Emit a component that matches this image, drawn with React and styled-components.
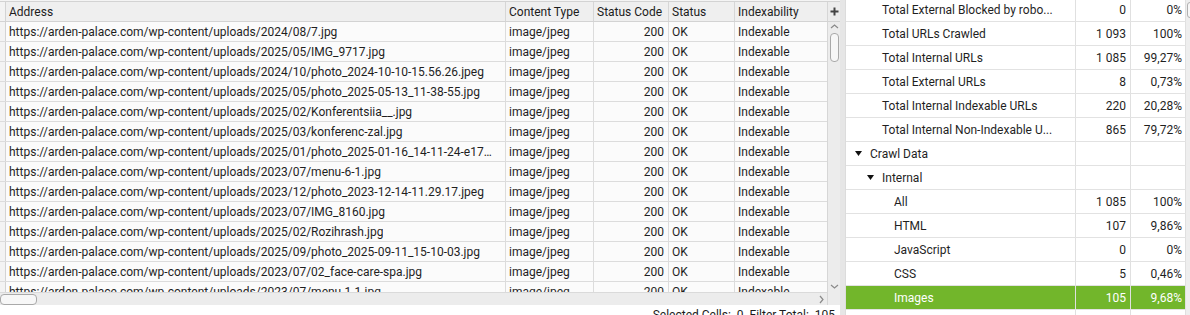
import React from 'react';
import styled, { createGlobalStyle } from 'styled-components';

const Global = createGlobalStyle`
  html, body { margin: 0; padding: 0; }
  body {
    font-family: Roboto, "Noto Sans", "Liberation Sans", sans-serif;
    font-size: 12px;
    color: #1f1f1f;
    background: #e8e8e8;
    overflow: hidden;
  }
  * { box-sizing: border-box; }
`;

const Page = styled.div`
  display: flex;
  width: 1190px;
  height: 315px;
  overflow: hidden;
  background: #e8e8e8;
`;

const LeftPanel = styled.div`
  width: 840px;
  flex: none;
  display: flex;
  flex-direction: column;
  padding-top: 1px;
  background: #f4f4f4;
  overflow: hidden;
`;

const COLS = '6px 500px 88px 75px 66px 92px';

const HeaderRow = styled.div`
  flex: none;
  display: grid;
  grid-template-columns: ${COLS} 13px;
  height: 21px;
  border-top: 1px solid #d3d3d3;
  border-bottom: 1px solid #d3d3d3;
  background: #efefef;
`;

const HeadCell = styled.div`
  display: flex;
  align-items: center;
  padding-left: 3px;
  border-right: ${p => (p.$last ? 'none' : '1px solid #d6d6d6')};
  white-space: nowrap;
  overflow: hidden;
  color: #1c1c1c;
`;

const PlusCell = styled.div`
  display: flex;
  align-items: center;
  justify-content: center;
  border-left: 1px solid #d6d6d6;
  background: #ececec;
`;

const Body = styled.div`
  flex: none;
  display: flex;
  height: 270px;
`;

const Rows = styled.div`
  width: 827px;
  overflow: hidden;
  background: #fff;
`;

const Row = styled.div`
  display: grid;
  grid-template-columns: ${COLS};
  height: 20px;
  border-bottom: 1px solid #dcdcdc;
  background: #fbfbfb;
`;

const Cell = styled.div`
  display: flex;
  align-items: center;
  justify-content: ${p => (p.$right ? 'flex-end' : 'flex-start')};
  padding: 0 ${p => (p.$right ? '4px' : '8px')} 0 ${p => (p.$right ? '0' : '3px')};
  border-right: ${p => (p.$last ? 'none' : '1px solid #dcdcdc')};
  white-space: nowrap;
  overflow: hidden;
  min-width: 0;
`;

const Ellip = styled.span`
  overflow: hidden;
  text-overflow: ellipsis;
  white-space: nowrap;
`;

const Gutter = styled.div`
  border-right: 1px solid #d3d3d3;
  background: #f3f3f3;
`;

const VScroll = styled.div`
  width: 13px;
  flex: none;
  border-left: 1px solid #d6d6d6;
  background: #ececec;
  display: flex;
  flex-direction: column;
  align-items: center;
  padding: 1px 0 2px;
`;

const Thumb = styled.div`
  width: ${p => p.$w};
  height: ${p => p.$h};
  margin-top: ${p => p.$mt || 0}px;
  border: 1px solid #a9a9a9;
  border-radius: 4px;
  background: #f7f7f7;
  flex: none;
`;

const Spacer = styled.div`
  flex: 1;
`;

const HScrollRow = styled.div`
  flex: none;
  display: flex;
  height: 13px;
`;

const HScroll = styled.div`
  width: 827px;
  display: flex;
  align-items: center;
  background: #ececec;
  border-top: 1px solid #dadada;
  padding: 0 2px 0 0;
`;

const Corner = styled.div`
  width: 13px;
  background: #ececec;
  border-left: 1px solid #d6d6d6;
`;

const StatusBar = styled.div`
  flex: 1 1 auto;
  min-height: 0;
  display: flex;
  justify-content: flex-end;
  gap: 6px;
  padding: 3px 5px 0 0;
  background: #fff;
  color: #1c1c1c;
  white-space: nowrap;
  overflow: hidden;
`;

const Divider = styled.div`
  width: 6px;
  flex: none;
  background: #e6e6e6;
  border-right: 1px solid #dcdcdc;
`;

const RightPanel = styled.div`
  width: 344px;
  flex: none;
  display: flex;
  overflow: hidden;
  background: #fff;
`;

const Tree = styled.div`
  width: 340px;
  flex: none;
  margin-top: -2px;
`;

const TreeRow = styled.div`
  display: grid;
  grid-template-columns: 230px 55px 55px;
  height: 24px;
  border-bottom: 1px solid #e2e2e2;
  background: ${p => (p.$selected ? '#72b62b' : '#fff')};
  color: ${p => (p.$selected ? '#fff' : '#1f1f1f')};
`;

const LabelCell = styled.div`
  display: flex;
  align-items: center;
  padding-left: ${p => 9 + p.$level * 12}px;
  border-right: 1px solid #e0e0e0;
  white-space: nowrap;
  overflow: hidden;
`;

const Toggle = styled.span`
  width: 15px;
  flex: none;
  display: flex;
  align-items: center;
`;

const NumCell = styled.div`
  display: flex;
  align-items: center;
  justify-content: flex-end;
  padding-right: ${p => p.$pr || 4}px;
  border-right: 1px solid #e0e0e0;
  white-space: nowrap;
`;

const RScroll = styled.div`
  width: 4px;
  flex: none;
  background: #eeeeee;
  display: flex;
  flex-direction: column;
  padding: 2px 0 0 1px;
`;

const RThumb = styled.div`
  width: 6px;
  height: 16px;
  border: 1px solid #b0b0b0;
  border-radius: 4px;
  background: #f7f7f7;
`;

const Chevron = ({ dir }) => {
  const pts = {
    up: '1,5 4.5,2 8,5',
    down: '1,2 4.5,5 8,2',
    right: '2,1 5,4.5 2,8',
  }[dir];
  const w = dir === 'right' ? 7 : 9;
  const h = dir === 'right' ? 9 : 7;
  return (
    <svg width={w} height={h} viewBox={`0 0 ${w} ${h}`}>
      <polyline points={pts} fill="none" stroke="#8a8a8a" strokeWidth="1.2" />
    </svg>
  );
};

const Triangle = () => (
  <svg width="7" height="5" viewBox="0 0 7 5">
    <polygon points="0,0 7,0 3.5,5" fill="#111" />
  </svg>
);

const Plus = () => (
  <svg width="9" height="9" viewBox="0 0 9 9">
    <rect x="3.5" y="0.5" width="2" height="8" fill="#444" />
    <rect x="0.5" y="3.5" width="8" height="2" fill="#444" />
  </svg>
);

const BASE = 'https://arden-palace.com/wp-content/uploads/';
const urls = [
  '2024/08/7.jpg',
  '2025/05/IMG_9717.jpg',
  '2024/10/photo_2024-10-10-15.56.26.jpeg',
  '2025/05/photo_2025-05-13_11-38-55.jpg',
  '2025/02/Konferentsiia__.jpg',
  '2025/03/konferenc-zal.jpg',
  '2025/01/photo_2025-01-16_14-11-24-e1737031885.jpg',
  '2023/07/menu-6-1.jpg',
  '2023/12/photo_2023-12-14-11.29.17.jpeg',
  '2023/07/IMG_8160.jpg',
  '2025/02/Rozihrash.jpg',
  '2025/09/photo_2025-09-11_15-10-03.jpg',
  '2023/07/02_face-care-spa.jpg',
  '2023/07/menu-1-1.jpg',
];

const tree = [
  { label: 'Total External Blocked by robo...', level: 1, v: '0', p: '0%' },
  { label: 'Total URLs Crawled', level: 1, v: '1 093', p: '100%' },
  { label: 'Total Internal URLs', level: 1, v: '1 085', p: '99,27%' },
  { label: 'Total External URLs', level: 1, v: '8', p: '0,73%' },
  { label: 'Total Internal Indexable URLs', level: 1, v: '220', p: '20,28%' },
  { label: 'Total Internal Non-Indexable U...', level: 1, v: '865', p: '79,72%' },
  { label: 'Crawl Data', level: 0, open: true, v: '', p: '' },
  { label: 'Internal', level: 1, open: true, v: '', p: '' },
  { label: 'All', level: 2, v: '1 085', p: '100%' },
  { label: 'HTML', level: 2, v: '107', p: '9,86%' },
  { label: 'JavaScript', level: 2, v: '0', p: '0%' },
  { label: 'CSS', level: 2, v: '5', p: '0,46%' },
  { label: 'Images', level: 2, v: '105', p: '9,68%', selected: true },
  { label: 'Media', level: 2, v: '', p: '', hidden: true },
];

export default function App() {
  return (
    <>
      <Global />
      <Page>
        <LeftPanel>
          <HeaderRow>
            <Gutter />
            <HeadCell>Address</HeadCell>
            <HeadCell>Content Type</HeadCell>
            <HeadCell>Status Code</HeadCell>
            <HeadCell>Status</HeadCell>
            <HeadCell $last>Indexability</HeadCell>
            <PlusCell>
              <Plus />
            </PlusCell>
          </HeaderRow>
          <Body>
            <Rows>
              {urls.map(u => (
                <Row key={u}>
                  <Gutter />
                  <Cell>
                    <Ellip>{BASE + u}</Ellip>
                  </Cell>
                  <Cell>image/jpeg</Cell>
                  <Cell $right>200</Cell>
                  <Cell>OK</Cell>
                  <Cell $last>Indexable</Cell>
                </Row>
              ))}
            </Rows>
            <VScroll>
              <Chevron dir="up" />
              <Thumb $w="9px" $h="29px" $mt={3} />
              <Spacer />
              <Chevron dir="down" />
            </VScroll>
          </Body>
          <HScrollRow>
            <HScroll>
              <Thumb $w="37px" $h="11px" />
              <Spacer />
              <Chevron dir="right" />
            </HScroll>
            <Corner />
          </HScrollRow>
          <StatusBar>
            <span>Selected Cells:&nbsp; 0</span>
            <span>Filter Total:&nbsp; 105</span>
          </StatusBar>
        </LeftPanel>
        <Divider />
        <RightPanel>
          <Tree>
            {tree.map(r => (
              <TreeRow key={r.label} $selected={r.selected}>
                <LabelCell $level={r.level}>
                  <Toggle>{r.open ? <Triangle /> : null}</Toggle>
                  {r.hidden ? '' : r.label}
                </LabelCell>
                <NumCell>{r.v}</NumCell>
                <NumCell $pr={3}>{r.p}</NumCell>
              </TreeRow>
            ))}
          </Tree>
          <RScroll>
            <RThumb />
          </RScroll>
        </RightPanel>
      </Page>
    </>
  );
}
